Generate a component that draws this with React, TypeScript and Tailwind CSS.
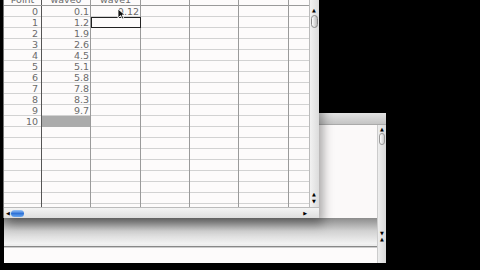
import React from "react";

const wave0 = ["0.1", "1.2", "1.9", "2.6", "4.5", "5.1", "5.8", "7.8", "8.3", "9.7"];
const cols = [49, 50, 49, 49, 50, 20];

function Cell({ w, children, className = "" }: { w: number; children?: React.ReactNode; className?: string }) {
  return (
    <div
      className={`h-[11px] shrink-0 border-r border-[#9a9a9a] pr-[1px] text-right leading-[11px] ${className}`}
      style={{ width: w }}
    >
      {children}
    </div>
  );
}

function Row({ i }: { i: number }) {
  const label = i <= 10 ? String(i) : "";
  return (
    <div className="flex h-[11px] border-b border-[#d2d2d2]">
      <div className="h-[11px] w-[38px] shrink-0 border-r border-[#555] pr-[3px] text-right leading-[11px]">{label}</div>
      <Cell w={cols[0]} className={i === 10 ? "bg-[#ababab]" : ""}>
        {i < 10 ? wave0[i] : ""}
      </Cell>
      <Cell w={cols[1]} className={i === 1 ? "outline outline-1 -outline-offset-1 outline-[#222]" : ""}>
        {i === 0 ? "0.12" : ""}
      </Cell>
      <Cell w={cols[2]} />
      <Cell w={cols[3]} />
      <Cell w={cols[4]} />
      <Cell w={cols[5]} className="border-r-0" />
    </div>
  );
}

export default function App() {
  const rows = Array.from({ length: 19 }, (_, i) => i);
  return (
    <div className="relative h-[270px] w-[480px] overflow-hidden bg-black font-['DejaVu_Sans',sans-serif] text-[9.5px] text-[#6a6a6a]">
      {/* back window */}
      <div className="absolute left-[4px] top-[113px] flex h-[150px] w-[382px] flex-col bg-[#fbf9f9]">
        <div className="h-[12px] border-b border-[#aaa] bg-gradient-to-b from-[#e4e4e4] to-[#c4c4c4]" />
        <div className="flex flex-1">
          <div className="flex flex-1 flex-col">
            <div className="h-[93px]" />
            <div className="h-[26px] bg-gradient-to-b from-[#8c8c8c] via-[#d2d2d2] to-[#f3f3f3]" />
            <div className="h-[3px] border-b border-[#888] bg-[#eee]" />
            <div className="flex-1 border-t border-[#ccc] bg-[#fdfbfb]" />
          </div>
          <div className="relative w-[9px] border-l border-[#ccc] bg-gradient-to-r from-[#eee] to-[#d8d8d8]">
            <div className="absolute left-[2px] top-[2px] text-[5px] leading-none text-black">▲</div>
            <div className="absolute left-[1px] top-[8px] h-[12px] w-[6px] rounded-full border border-[#999] bg-gradient-to-r from-[#fff] to-[#ccc]" />
            <div className="absolute left-[2px] top-[106px] text-[5px] leading-none text-black">▼</div>
            <div className="absolute left-[2px] top-[112px] text-[5px] leading-none text-black">▲</div>
          </div>
        </div>
      </div>

      {/* front window */}
      <div className="absolute left-[3px] top-0 flex h-[218px] w-[316px] flex-col border-l border-[#777] bg-[#fdfbfb] shadow-[4px_6px_10px_rgba(0,0,0,0.35)]">
        <div className="flex flex-1 overflow-hidden">
          <div className="-mt-[5px] flex-1 overflow-hidden">
            <div className="flex h-[11px] border-b border-[#9a9a9a]">
              <div className="w-[38px] shrink-0 border-r border-[#555] text-center leading-[9px]">Point</div>
              <div className="w-[49px] shrink-0 border-r border-[#9a9a9a] text-center leading-[9px]">wave0</div>
              <div className="w-[50px] shrink-0 border-r border-[#9a9a9a] text-center leading-[9px]">wave1</div>
              <div className="w-[49px] shrink-0 border-r border-[#9a9a9a]" />
              <div className="w-[49px] shrink-0 border-r border-[#9a9a9a]" />
              <div className="w-[50px] shrink-0 border-r border-[#9a9a9a]" />
            </div>
            {rows.map((i) => (
              <Row key={i} i={i} />
            ))}
          </div>
          <div className="relative w-[10px] border-l border-[#bbb] bg-gradient-to-r from-[#f2f2f2] to-[#dcdcdc]">
            <div className="absolute left-[2px] top-[8px] text-[5px] leading-none text-black">▲</div>
            <div className="absolute left-[1px] top-[15px] h-[13px] w-[7px] rounded-full border border-[#888] bg-gradient-to-r from-[#fff] to-[#bbb]" />
            <div className="absolute left-[2px] top-[192px] text-[5px] leading-none text-black">▲</div>
            <div className="absolute left-[2px] top-[199px] text-[5px] leading-none text-black">▼</div>
          </div>
        </div>
        <div className="relative flex h-[11px] items-center border-t border-[#bbb] bg-gradient-to-b from-[#f4f4f4] to-[#dedede]">
          <div className="ml-[2px] text-[5px] leading-none text-black">◀</div>
          <div className="ml-[1px] h-[7px] w-[13px] rounded-full bg-gradient-to-b from-[#9cc6f5] via-[#2f73d8] to-[#6aa8ee]" />
          <div className="ml-auto mr-[12px] text-[5px] leading-none text-black">▶</div>
        </div>
      </div>

      {/* mouse cursor */}
      <svg className="absolute left-[117px] top-[8px]" width="9" height="12" viewBox="0 0 9 12">
        <path d="M1 1 L1 10 L3.5 7.5 L5.5 11 L7 10.3 L5 7 L8 7 Z" fill="#111" stroke="#fff" strokeWidth="0.8" />
      </svg>
    </div>
  );
}
